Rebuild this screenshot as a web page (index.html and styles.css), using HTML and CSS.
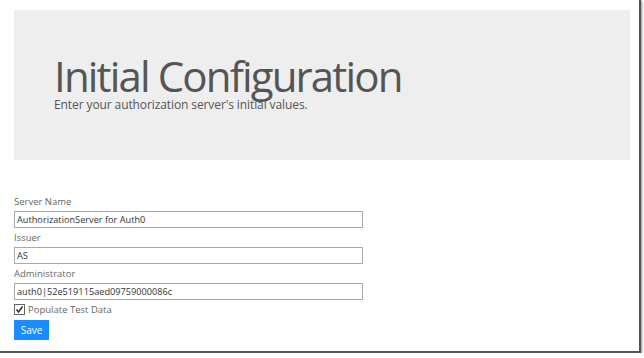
FILE: index.html
```html
<!DOCTYPE html>
<html lang="en">
<head>
    <meta charset="UTF-8">
    <meta name="viewport" content="width=device-width, initial-scale=1.0">
    <title>Initial Configuration</title>
    <link rel="stylesheet" href="styles.css">
</head>
<body>
    <div class="frame">
        <div class="jumbotron">
            <h1>Initial Configuration</h1>
            <p>Enter your authorization server's initial values.</p>
        </div>

        <form class="config-form">
            <label for="serverName">Server Name</label>
            <input type="text" id="serverName" value="AuthorizationServer for Auth0">

            <label for="issuer">Issuer</label>
            <input type="text" id="issuer" value="AS">

            <label for="admin">Administrator</label>
            <input type="text" id="admin" value="auth0|52e519115aed09759000086c">

            <div class="check-row">
                <span class="check-box">
                    <svg width="9" height="9" viewBox="0 0 9 9">
                        <path d="M1.5 4.5 L3.5 7 L7.5 1.5" fill="none" stroke="#333" stroke-width="1.6"/>
                    </svg>
                </span>
                <label>Populate Test Data</label>
            </div>

            <button type="button" class="btn-save">Save</button>
        </form>
    </div>
</body>
</html>
```

FILE: styles.css
```css
/* Page */
body {
    margin: 0;
    padding: 0;
    background: #fff;
    font-family: 'Open Sans', sans-serif;
    color: #555;
}

/* Screenshot frame with its shadow */
.frame {
    width: 641px;
    height: 353px;
    padding-top: 10px;
    box-sizing: border-box;
    background: #fff;
    border-right: 2px solid #555;
    border-bottom: 2px solid #555;
    box-shadow: 1px 1px 2px rgba(0, 0, 0, 0.45);
}

/* Header box */
.jumbotron {
    background: #eee;
    margin-left: 14px;
    width: 616px;
    height: 150px;
    box-sizing: border-box;
    padding: 44px 0 0 40px;
}

.jumbotron h1 {
    margin: 0;
    font-size: 42px;
    font-weight: 400;
    letter-spacing: -1.85px;
    line-height: 44px;
    color: #555;
}

.jumbotron p {
    margin: 0;
    font-size: 12px;
    letter-spacing: -0.1px;
    line-height: 14px;
    color: #555;
}

/* Form */
.config-form {
    display: flex;
    flex-direction: column;
    align-items: flex-start;
    padding: 32px 0 0 14px;
}

.config-form label {
    font-size: 9.5px;
    line-height: 19px;
    color: #666;
}

.config-form input[type="text"] {
    width: 349px;
    height: 17px;
    box-sizing: border-box;
    margin: 0;
    padding: 0 2px;
    border: 1px solid #aaa;
    font-family: 'Open Sans', sans-serif;
    font-size: 9.2px;
    color: #333;
}

.check-row {
    display: flex;
    align-items: center;
    gap: 3px;
}

.check-box {
    display: flex;
    align-items: center;
    justify-content: center;
    width: 11px;
    height: 11px;
    box-sizing: border-box;
    border: 1px solid #666;
    background: #fff;
}

.btn-save {
    margin-top: 1px;
    width: 35px;
    height: 20px;
    padding: 0;
    border: none;
    background: #1a8cff;
    color: #fff;
    font-family: 'Open Sans', sans-serif;
    font-size: 10px;
}
```
